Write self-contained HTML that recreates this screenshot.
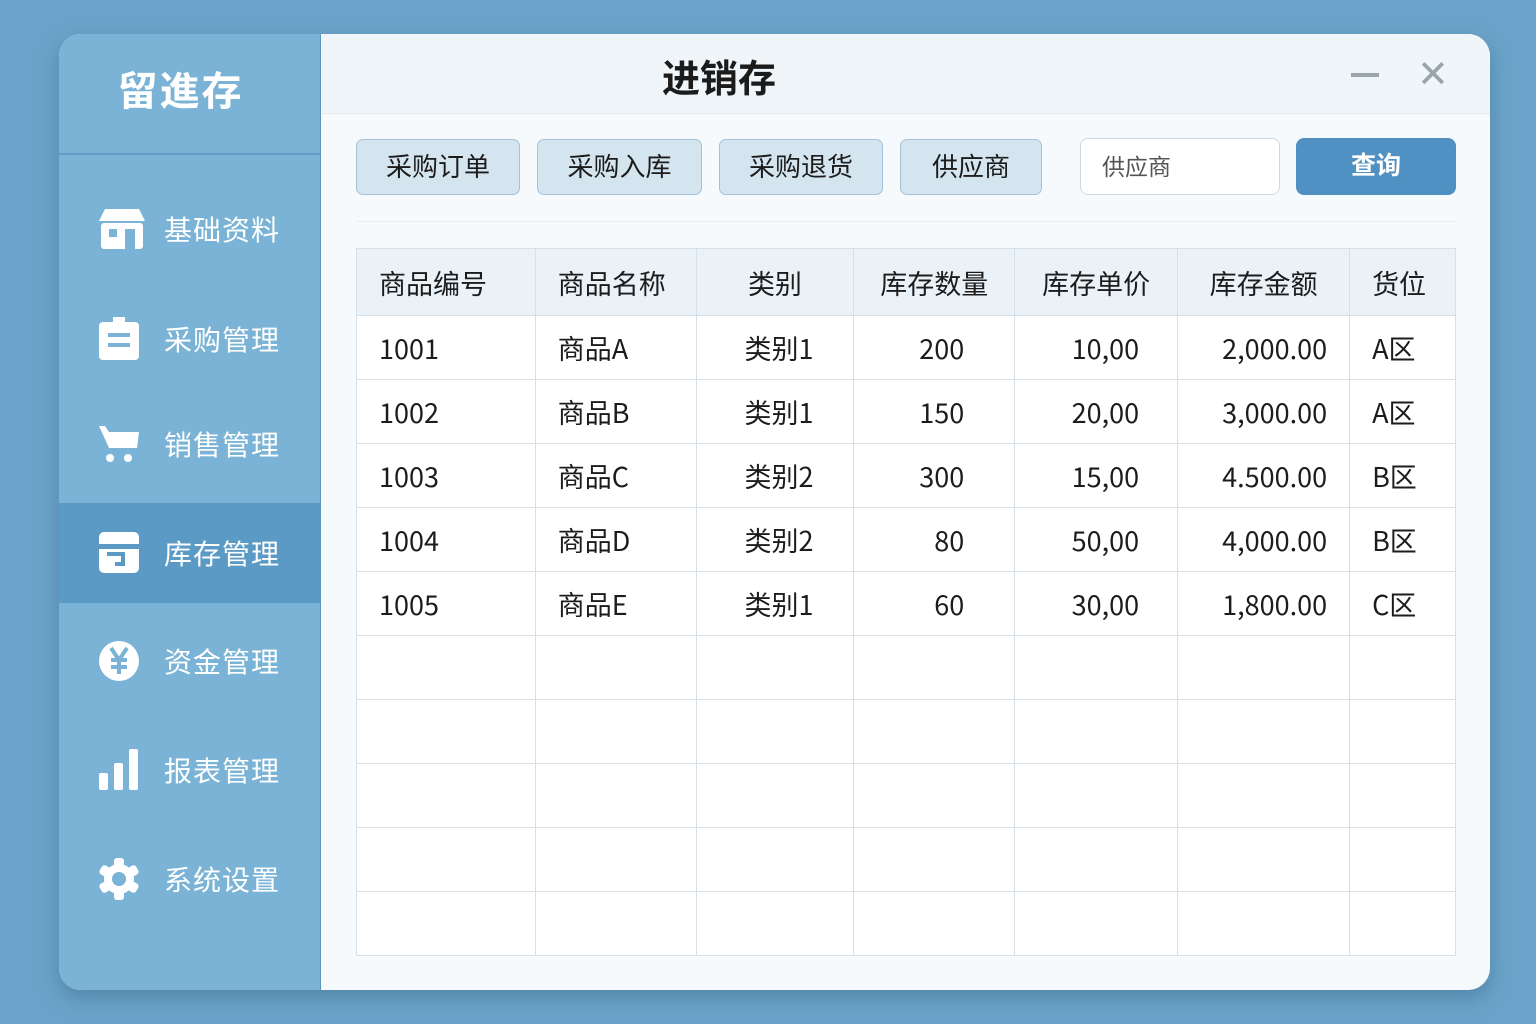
<!DOCTYPE html>
<html><head><meta charset="utf-8"><style>
*{margin:0;padding:0;box-sizing:border-box}
body{width:1536px;height:1024px;background:#6aa3c9;font-family:"Liberation Sans","Noto Sans CJK SC",sans-serif;position:relative;overflow:hidden}
.win{position:absolute;left:59px;top:34px;width:1431px;height:956px;border-radius:22px;overflow:hidden;background:#f7fafd;box-shadow:0 8px 20px rgba(40,80,110,.35)}
.side{position:absolute;left:0;top:0;width:262px;height:956px;background:#7ab3d5;border-right:1px solid #5b94bd}
.logo{height:121px;border-bottom:2px solid #5f9cc6;color:#fff;font-size:40px;font-weight:bold;text-align:center;line-height:116px;letter-spacing:2px;padding-right:18px}
.item{position:absolute;left:0;width:262px;height:100px;color:#fff;font-size:28px;letter-spacing:1px}
.item svg{position:absolute;left:40px;top:50%;transform:translateY(-50%)}
.item span{position:absolute;left:105px;top:50%;transform:translateY(-50%)}
.item.act{background:#5b9ac4}
.head{position:absolute;left:263px;top:0;right:0;height:80px;background:#f0f5f9;border-bottom:1px solid #e3ebf1}
.title{position:absolute;left:340px;top:14px;font-size:38px;font-weight:bold;color:#1b1b1b}
.btn{position:absolute;top:105px;height:56px;background:#d5e5f0;border:1.5px solid #a3c2d7;border-radius:7px;font-size:26px;color:#1c1c1c;text-align:center;line-height:54px}
.inp{position:absolute;left:1021px;top:104px;width:200px;height:57px;background:#fff;border:1.5px solid #cfd8df;border-radius:8px;font-size:23px;color:#555;line-height:56px;padding-left:21px}
.q{position:absolute;left:1237px;top:104px;width:160px;height:57px;background:#4f91c2;border-radius:8px;color:#fff;font-size:25px;font-weight:bold;text-align:center;line-height:57px}
table{position:absolute;left:297px;top:214px;width:1100px;border-collapse:collapse;background:#fff;font-size:27px;color:#1c1c1c;font-family:"Noto Sans CJK SC","Liberation Sans",sans-serif}
td,th{border:1px solid #d5e0e8;height:64px;font-weight:normal;padding:0 22px}
th{height:67px;background:#eaf2f8;text-align:left}
.r{text-align:right}
</style></head><body>
<div class="win">
<div class="side">
<div class="logo">留進存</div>
<div class="item" style="top:145px"><svg width="46" height="40" viewBox="0 0 46 40"><path d="M6 0h34l6 12H0z" fill="#fff"/><rect x="2" y="14" width="42" height="26" rx="3" fill="#fff"/><rect x="10" y="20" width="8" height="8" fill="#7ab3d5"/><rect x="26" y="20" width="10" height="20" fill="#7ab3d5"/></svg><span>基础资料</span></div>
<div class="item" style="top:255px"><svg width="42" height="44" viewBox="0 0 42 44"><rect x="0" y="5" width="40" height="38" rx="4" fill="#fff"/><rect x="14" y="0" width="12" height="8" fill="#fff"/><rect x="9" y="16" width="22" height="4" fill="#7ab3d5"/><rect x="9" y="26" width="22" height="4" fill="#7ab3d5"/></svg><span>采购管理</span></div>
<div class="item" style="top:360px"><svg width="42" height="40" viewBox="0 0 42 40"><path d="M0 2h6l4 6h30l-2 16H10z" fill="#fff"/><circle cx="11" cy="34" r="4" fill="#fff"/><circle cx="29" cy="34" r="4" fill="#fff"/></svg><span>销售管理</span></div>
<div class="item act" style="top:469px"><svg width="42" height="42" viewBox="0 0 42 42"><rect x="0" y="0" width="40" height="41" rx="5" fill="#fff"/><rect x="0" y="12" width="40" height="5" fill="#5b9ac4"/><path d="M8 22h16v10h-8" stroke="#5b9ac4" stroke-width="4" fill="none"/></svg><span>库存管理</span></div>
<div class="item" style="top:577px"><svg width="42" height="44" viewBox="0 0 42 44"><circle cx="20" cy="22" r="20" fill="#fff"/><path d="M12 9l8 12 8-12M12 21h16M12 28h16M20 21v14" stroke="#7ab3d5" stroke-width="4" fill="none"/></svg><span>资金管理</span></div>
<div class="item" style="top:686px"><svg width="42" height="42" viewBox="0 0 42 42"><rect x="0" y="24" width="9" height="17" rx="2" fill="#fff"/><rect x="15" y="14" width="9" height="27" rx="2" fill="#fff"/><rect x="30" y="0" width="9" height="41" rx="2" fill="#fff"/></svg><span>报表管理</span></div>
<div class="item" style="top:795px"><svg width="42" height="42" viewBox="0 0 42 42"><g fill="#fff"><circle cx="20" cy="21" r="15"/><rect x="15" y="0" width="10" height="42" rx="3"/><rect x="15" y="0" width="10" height="42" rx="3" transform="rotate(60 20 21)"/><rect x="15" y="0" width="10" height="42" rx="3" transform="rotate(120 20 21)"/></g><circle cx="20" cy="21" r="7" fill="#7ab3d5"/></svg><span>系统设置</span></div>
</div>
<div class="head"><div class="title">进销存</div>
<div style="position:absolute;left:1029px;top:39px;width:28px;height:4px;background:#9aa4ab"></div>
<div style="position:absolute;left:1095px;top:18px;font-size:38px;color:#9aa4ab">✕</div></div>
<div class="btn" style="left:297px;width:164px">采购订单</div>
<div class="btn" style="left:478px;width:165px">采购入库</div>
<div class="btn" style="left:660px;width:164px">采购退货</div>
<div class="btn" style="left:841px;width:142px">供应商</div>
<div class="inp">供应商</div>
<div class="q">查询</div>
<div style="position:absolute;left:297px;right:34px;top:187px;height:1px;background:#e8eef3"></div>
<table>
<colgroup><col style="width:179px"><col style="width:161px"><col style="width:158px"><col style="width:161px"><col style="width:163px"><col style="width:172px"><col style="width:106px"></colgroup>
<tr><th>商品编号</th><th>商品名称</th><th style="text-align:center">类别</th><th style="text-align:center">库存数量</th><th style="text-align:center">库存单价</th><th style="text-align:center">库存金额</th><th>货位</th></tr>
<tr><td>1001</td><td>商品A</td><td style="padding-left:48px">类别1</td><td class="r" style="padding-right:50px">200</td><td class="r" style="padding-right:38px">10,00</td><td class="r">2,000.00</td><td>A区</td></tr>
<tr><td>1002</td><td>商品B</td><td style="padding-left:48px">类别1</td><td class="r" style="padding-right:50px">150</td><td class="r" style="padding-right:38px">20,00</td><td class="r">3,000.00</td><td>A区</td></tr>
<tr><td>1003</td><td>商品C</td><td style="padding-left:48px">类别2</td><td class="r" style="padding-right:50px">300</td><td class="r" style="padding-right:38px">15,00</td><td class="r">4.500.00</td><td>B区</td></tr>
<tr><td>1004</td><td>商品D</td><td style="padding-left:48px">类别2</td><td class="r" style="padding-right:50px">80</td><td class="r" style="padding-right:38px">50,00</td><td class="r">4,000.00</td><td>B区</td></tr>
<tr><td>1005</td><td>商品E</td><td style="padding-left:48px">类别1</td><td class="r" style="padding-right:50px">60</td><td class="r" style="padding-right:38px">30,00</td><td class="r">1,800.00</td><td>C区</td></tr>
<tr><td></td><td></td><td></td><td></td><td></td><td></td><td></td></tr>
<tr><td></td><td></td><td></td><td></td><td></td><td></td><td></td></tr>
<tr><td></td><td></td><td></td><td></td><td></td><td></td><td></td></tr>
<tr><td></td><td></td><td></td><td></td><td></td><td></td><td></td></tr>
<tr><td style="height:59px"></td><td></td><td></td><td></td><td></td><td></td><td></td></tr>
</table>
</div>
</body></html>
